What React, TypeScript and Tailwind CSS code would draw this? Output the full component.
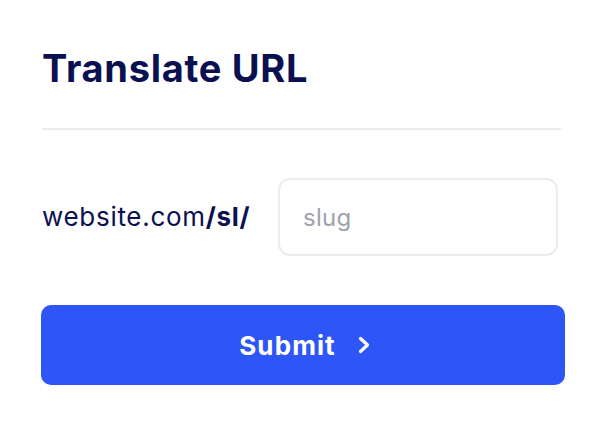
export default function App() {
    return (
        <div className="min-h-screen bg-white px-[41px] pt-[46px] font-['Inter',sans-serif]">
            <div className="w-[524px]">
                <h1 className="text-[38px] font-bold leading-[44px] tracking-[0.7px] text-[#0b1150] pl-px">
                    Translate URL
                </h1>

                <div className="mt-[38px] ml-px mr-[4px] h-[2px] bg-[#ececee]" />

                <div className="mt-[48px] flex items-center pl-px">
                    <span className="text-[26px] leading-none text-[#0b1150] tracking-[0.7px]">
                        website.com<span className="font-bold">/sl/</span>
                    </span>
                    <input
                        type="text"
                        placeholder="slug"
                        className="ml-auto mr-[7px] h-[78px] w-[280px] rounded-[12px] border-2 border-[#ebecef] bg-white px-[23px] text-[24px] tracking-[0.3px] text-[#0b1150] placeholder:text-[#9ea3ad] outline-none"
                    />
                </div>

                <button className="mt-[49px] flex h-[80px] w-full items-center justify-center gap-[21px] rounded-[10px] bg-[#2e55f6] pl-[4px] text-[26px] font-bold tracking-[1.1px] text-white">
                    <span>Submit</span>
                    <svg width="14" height="18" viewBox="0 0 14 18" fill="none" stroke="currentColor" strokeWidth="3.2" strokeLinecap="round" strokeLinejoin="round">
                        <path d="M3.5 2.5 L10.5 9 L3.5 15.5" />
                    </svg>
                </button>
            </div>
        </div>
    );
}
